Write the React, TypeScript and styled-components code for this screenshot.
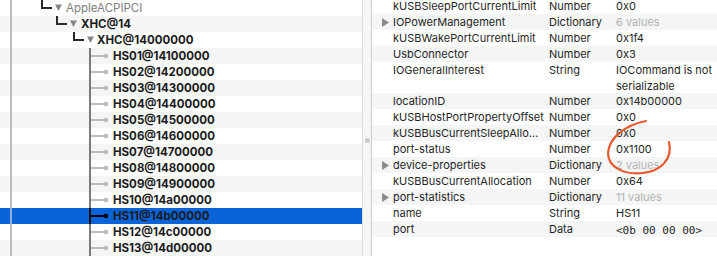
import React, { ReactElement } from 'react';
import styled, { createGlobalStyle } from 'styled-components';

const GlobalStyle = createGlobalStyle`
  html, body {
    margin: 0;
    padding: 0;
    background: #ffffff;
  }
`;

type TreeItem = {
  label: string;
  kind: 'parent' | 'leaf';
  elbowX?: number;
  textX: number;
  muted?: boolean;
};

const hsIds = ['1', '2', '3', '4', '5', '6', '7', '8', '9', 'a', 'b', 'c', 'd'];

const treeItems: TreeItem[] = [
  { label: 'AppleACPIPCI', kind: 'parent', elbowX: 42, textX: 66, muted: true },
  { label: 'XHC@14', kind: 'parent', elbowX: 57, textX: 81 },
  { label: 'XHC@14000000', kind: 'parent', elbowX: 74, textX: 97 },
  ...hsIds.map((id, i) => ({
    label: `HS${String(i + 1).padStart(2, '0')}@14${id}00000`,
    kind: 'leaf' as const,
    textX: 113,
  })),
];

type Prop = {
  key: string;
  type: string;
  value: string;
  expandable?: boolean;
  muted?: boolean;
  mono?: boolean;
  tall?: boolean;
};

const props: Prop[] = [
  { key: 'kUSBSleepPortCurrentLimit', type: 'Number', value: '0x0' },
  { key: 'IOPowerManagement', type: 'Dictionary', value: '6 values', expandable: true, muted: true },
  { key: 'kUSBWakePortCurrentLimit', type: 'Number', value: '0x1f4' },
  { key: 'UsbConnector', type: 'Number', value: '0x3' },
  { key: 'IOGeneralInterest', type: 'String', value: 'IOCommand is not\nserializable', tall: true },
  { key: 'locationID', type: 'Number', value: '0x14b00000' },
  { key: 'kUSBHostPortPropertyOffset', type: 'Number', value: '0x0' },
  { key: 'kUSBBusCurrentSleepAllo…', type: 'Number', value: '0x0' },
  { key: 'port-status', type: 'Number', value: '0x1100' },
  { key: 'device-properties', type: 'Dictionary', value: '2 values', expandable: true, muted: true },
  { key: 'kUSBBusCurrentAllocation', type: 'Number', value: '0x64' },
  { key: 'port-statistics', type: 'Dictionary', value: '11 values', expandable: true, muted: true },
  { key: 'name', type: 'String', value: 'HS11' },
  { key: 'port', type: 'Data', value: '<0b 00 00 00>', mono: true },
];

const SELECTED = 10 + 3;

const Connector = ({ item, selected }: { item: TreeItem; selected: boolean }): ReactElement => {
  const w = item.textX;
  return (
    <svg width={w} height={16} viewBox={`0 0 ${w} 16`} style={{ flex: 'none' }}>
      <rect x={10} y={0} width={2} height={16} fill={selected ? '#8fb0e0' : '#bdbdbd'} />
      {item.kind === 'parent' && item.elbowX !== undefined ? (
        <>
          <rect x={item.elbowX - 1} y={0} width={2} height={9} fill="#2a2a2a" />
          <rect x={item.elbowX - 1} y={7} width={11} height={2} fill="#2a2a2a" />
          <polygon
            points={`${item.elbowX + 13},4.5 ${item.elbowX + 20},4.5 ${item.elbowX + 16.5},11`}
            fill="#858585"
          />
        </>
      ) : (
        <>
          <rect x={89} y={0} width={2} height={16} fill={selected ? '#111111' : '#7a7a7a'} />
          <rect x={91} y={7} width={14} height={2} fill={selected ? '#000000' : '#bcbcbc'} />
          <circle cx={106} cy={8} r={2.3} fill={selected ? '#000000' : '#bcbcbc'} />
        </>
      )}
    </svg>
  );
};

const Disclosure = (): ReactElement => (
  <svg width={7} height={9} viewBox="0 0 7 9">
    <polygon points="0,0 7,4.5 0,9" fill="#8a8a8a" />
  </svg>
);

const App = (): ReactElement => {
  return (
    <Window>
      <GlobalStyle />
      <TreePane>
        {treeItems.map((item, i) => (
          <TreeRow key={item.label} $striped={i % 2 === 1} $selected={i === SELECTED}>
            <Connector item={item} selected={i === SELECTED} />
            <TreeLabel $muted={!!item.muted}>{item.label}</TreeLabel>
          </TreeRow>
        ))}
      </TreePane>
      <Splitter>
        <Grip />
      </Splitter>
      <PropPane>
        <PropList>
          {props.map((p, i) => (
            <PropRow key={p.key} $striped={i % 2 === 1} $tall={!!p.tall}>
              <KeyCell>
                <DisclosureBox>{p.expandable && <Disclosure />}</DisclosureBox>
                {p.key}
              </KeyCell>
              <TypeCell>{p.type}</TypeCell>
              <ValueCell $muted={!!p.muted} $mono={!!p.mono}>
                {p.value}
              </ValueCell>
            </PropRow>
          ))}
        </PropList>
      </PropPane>
      <Annotation width={717} height={256} viewBox="0 0 717 256">
        <path
          d="M 646 121 C 625 125, 609 138, 608 153 C 608 168, 625 175, 643 173 C 661 171, 673 159, 669 142"
          fill="none"
          stroke="#e8582c"
          strokeWidth={2.2}
          strokeLinecap="round"
        />
      </Annotation>
    </Window>
  );
};

const Window = styled.div`
  width: 717px;
  height: 256px;
  display: flex;
  position: relative;
  overflow: hidden;
  background: #ffffff;
  font-family: Inter, 'Liberation Sans', sans-serif;
`;

const TreePane = styled.div`
  width: 362px;
  flex: none;
  overflow: hidden;
`;

const TreeRow = styled.div<{ $striped: boolean; $selected: boolean }>`
  height: 16px;
  display: flex;
  align-items: center;
  background: ${(p) => (p.$selected ? '#0b63d8' : p.$striped ? '#f4f5f5' : '#ffffff')};
`;

const TreeLabel = styled.span<{ $muted: boolean }>`
  font-size: 11.5px;
  line-height: 16px;
  font-weight: ${(p) => (p.$muted ? 400 : 700)};
  color: ${(p) => (p.$muted ? '#7e7e7e' : '#1c1c1c')};
  white-space: nowrap;
`;

const Splitter = styled.div`
  width: 10px;
  flex: none;
  box-sizing: border-box;
  border-left: 1px solid #dedede;
  border-right: 1px solid #cdcdcd;
  background: #f6f6f6;
  display: flex;
  flex-direction: column;
  align-items: center;
  padding-top: 138px;
`;

const Grip = styled.div`
  width: 5px;
  height: 5px;
  border-radius: 50%;
  background: #c8c8c8;
`;

const PropPane = styled.div`
  flex: 1;
  overflow: hidden;
`;

const PropList = styled.div`
  margin-top: -2px;
`;

const PropRow = styled.div<{ $striped: boolean; $tall: boolean }>`
  display: grid;
  grid-template-columns: 177px 67px 1fr;
  height: ${(p) => (p.$tall ? 31 : 16)}px;
  line-height: 16px;
  font-size: 11px;
  color: #262626;
  background: ${(p) => (p.$striped ? '#f4f5f5' : '#ffffff')};
`;

const KeyCell = styled.div`
  display: flex;
  align-items: flex-start;
  padding-left: 10px;
  white-space: nowrap;
  overflow: hidden;
`;

const DisclosureBox = styled.span`
  width: 11px;
  height: 16px;
  flex: none;
  display: flex;
  align-items: center;
`;

const TypeCell = styled.div`
  white-space: nowrap;
`;

const ValueCell = styled.div<{ $muted: boolean; $mono: boolean }>`
  white-space: pre-line;
  color: ${(p) => (p.$muted ? '#b3b3b3' : '#262626')};
  font-family: ${(p) => (p.$mono ? "'DejaVu Sans Mono', monospace" : 'inherit')};
  font-size: 11px;
  padding-top: ${(p) => (p.$mono ? '2px' : '0')};
`;

const Annotation = styled.svg`
  position: absolute;
  left: 0;
  top: 0;
  pointer-events: none;
`;

export default App;
